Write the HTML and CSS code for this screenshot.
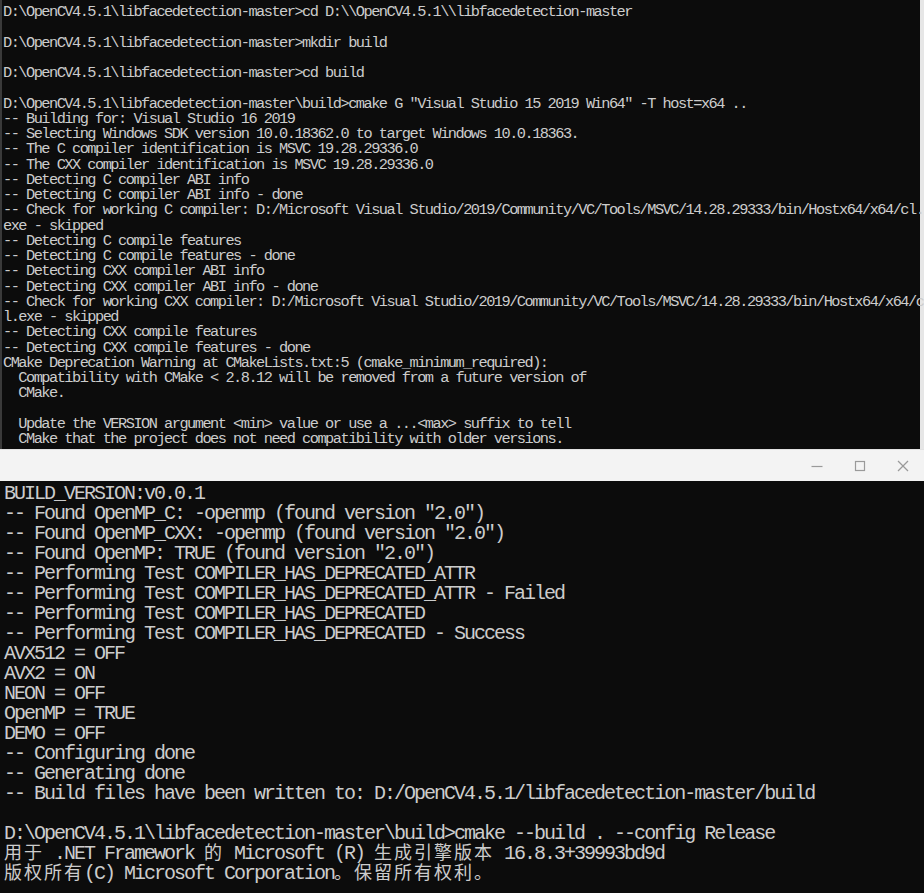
FILE: index.html
```html
<!DOCTYPE html>
<html lang="zh-CN">
<head>
<meta charset="utf-8">
<title>cmd</title>
<link rel="stylesheet" href="styles.css">
</head>
<body>
<div class="screen">
<section class="console console-top"><pre class="text">D:\OpenCV4.5.1\libfacedetection-master&gt;cd D:\\OpenCV4.5.1\\libfacedetection-master

D:\OpenCV4.5.1\libfacedetection-master&gt;mkdir build

D:\OpenCV4.5.1\libfacedetection-master&gt;cd build

D:\OpenCV4.5.1\libfacedetection-master\build&gt;cmake G "Visual Studio 15 2019 Win64" -T host=x64 ..
-- Building for: Visual Studio 16 2019
-- Selecting Windows SDK version 10.0.18362.0 to target Windows 10.0.18363.
-- The C compiler identification is MSVC 19.28.29336.0
-- The CXX compiler identification is MSVC 19.28.29336.0
-- Detecting C compiler ABI info
-- Detecting C compiler ABI info - done
-- Check for working C compiler: D:/Microsoft Visual Studio/2019/Community/VC/Tools/MSVC/14.28.29333/bin/Hostx64/x64/cl.
exe - skipped
-- Detecting C compile features
-- Detecting C compile features - done
-- Detecting CXX compiler ABI info
-- Detecting CXX compiler ABI info - done
-- Check for working CXX compiler: D:/Microsoft Visual Studio/2019/Community/VC/Tools/MSVC/14.28.29333/bin/Hostx64/x64/c
l.exe - skipped
-- Detecting CXX compile features
-- Detecting CXX compile features - done
CMake Deprecation Warning at CMakeLists.txt:5 (cmake_minimum_required):
  Compatibility with CMake &lt; 2.8.12 will be removed from a future version of
  CMake.

  Update the VERSION argument &lt;min&gt; value or use a ...&lt;max&gt; suffix to tell
  CMake that the project does not need compatibility with older versions.</pre></section>
<div class="titlebar">
  <span class="tb-btn"><svg width="12" height="12" viewBox="0 0 12 12"><line x1="0.5" y1="6.5" x2="11.5" y2="6.5" /></svg></span>
  <span class="tb-btn"><svg width="12" height="12" viewBox="0 0 12 12"><rect x="1.5" y="1.5" width="9" height="9" /></svg></span>
  <span class="tb-btn"><svg width="12" height="12" viewBox="0 0 12 12"><line x1="1" y1="1" x2="11" y2="11" /><line x1="11" y1="1" x2="1" y2="11" /></svg></span>
</div>
<section class="console console-bottom"><pre class="text">BUILD_VERSION:v0.0.1
-- Found OpenMP_C: -openmp (found version "2.0")
-- Found OpenMP_CXX: -openmp (found version "2.0")
-- Found OpenMP: TRUE (found version "2.0")
-- Performing Test COMPILER_HAS_DEPRECATED_ATTR
-- Performing Test COMPILER_HAS_DEPRECATED_ATTR - Failed
-- Performing Test COMPILER_HAS_DEPRECATED
-- Performing Test COMPILER_HAS_DEPRECATED - Success
AVX512 = OFF
AVX2 = ON
NEON = OFF
OpenMP = TRUE
DEMO = OFF
-- Configuring done
-- Generating done
-- Build files have been written to: D:/OpenCV4.5.1/libfacedetection-master/build

D:\OpenCV4.5.1\libfacedetection-master\build&gt;cmake --build . --config Release
<span class="cjk">用于</span> .NET Framework <span class="cjk">的</span> Microsoft (R) <span class="cjk">生成引擎版本</span> 16.8.3+39993bd9d
<span class="cjk">版权所有</span>(C) Microsoft Corporation<span class="cjk">。保留所有权利。</span></pre></section>
</div>
</body>
</html>
```

FILE: styles.css
```css
html, body {
  margin: 0;
  padding: 0;
  background: #0c0c0c;
}

.screen {
  width: 924px;
  height: 893px;
  overflow: hidden;
  display: flex;
  flex-direction: column;
  background: #e6e6e6;
}

.console {
  background: #0c0c0c;
  color: #cccccc;
  font-family: "Liberation Mono", "Noto Sans CJK SC", monospace;
}

.text {
  margin: 0;
  white-space: pre;
  font-family: inherit;
}

.console-top {
  height: 449px;
  margin-right: 4px;
  border-left: 2px solid #3a3a3a;
  box-sizing: border-box;
  padding: 5px 0 0 1px;
}

.console-top .text {
  font-size: 15.3px;
  line-height: 15.25px;
  letter-spacing: -1.51px;
}

.titlebar {
  height: 32px;
  box-sizing: border-box;
  background: #f3f3f3;
  border-top: 1px solid #e2e2e2;
  display: flex;
  justify-content: flex-end;
  align-items: center;
}

.tb-btn {
  width: 43px;
  height: 31px;
  display: flex;
  align-items: center;
  justify-content: center;
}

.tb-btn svg {
  stroke: #9a9a9a;
  stroke-width: 1.2;
  fill: none;
}

.console-bottom {
  flex: 1;
  padding: 3px 0 0 4px;
}

.console-bottom .text {
  font-size: 20px;
  line-height: 20px;
  letter-spacing: -2px;
}

.cjk {
  display: inline-block;
  height: 20px;
  vertical-align: baseline;
  font-family: "Noto Sans CJK SC", sans-serif;
  font-size: 18px;
  line-height: 14.9px;
  letter-spacing: 2px;
}
```
